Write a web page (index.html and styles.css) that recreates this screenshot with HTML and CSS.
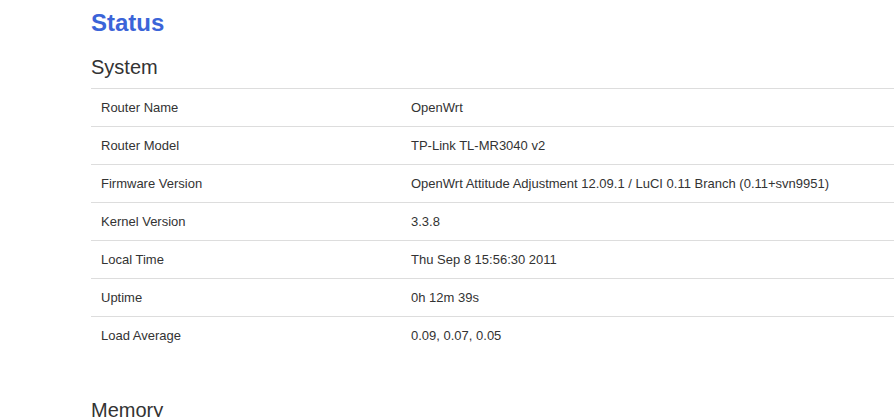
FILE: index.html
```html
<!DOCTYPE html>
<html lang="en">
<head>
    <meta charset="UTF-8">
    <meta name="viewport" content="width=device-width, initial-scale=1.0">
    <title>Status</title>
    <link rel="stylesheet" href="styles.css">
</head>
<body>
    <div class="main">
        <h2 class="page-title">Status</h2>

        <div class="section">
            <h3>System</h3>
            <table class="info-table">
                <tr><td>Router Name</td><td>OpenWrt</td></tr>
                <tr><td>Router Model</td><td>TP-Link TL-MR3040 v2</td></tr>
                <tr><td>Firmware Version</td><td>OpenWrt Attitude Adjustment 12.09.1 / LuCI 0.11 Branch (0.11+svn9951)</td></tr>
                <tr><td>Kernel Version</td><td>3.3.8</td></tr>
                <tr><td>Local Time</td><td>Thu Sep 8 15:56:30 2011</td></tr>
                <tr><td>Uptime</td><td>0h 12m 39s</td></tr>
                <tr><td>Load Average</td><td>0.09, 0.07, 0.05</td></tr>
            </table>
        </div>

        <div class="section">
            <h3>Memory</h3>
        </div>
    </div>
</body>
</html>
```

FILE: styles.css
```css
body {
    font-family: "Liberation Sans", Arial, sans-serif;
    margin: 0;
    padding: 0;
    background: #fff;
    color: #333;
    overflow: hidden;
}
.main {
    padding: 8px 0 0 91px;
}
.page-title {
    margin: 0;
    font-size: 24px;
    line-height: 29px;
    font-weight: bold;
    color: #3b64d8;
}
.section {
    margin-top: 18px;
}
.section + .section {
    margin-top: 44px;
}
.section h3 {
    margin: 0 0 9px;
    font-size: 20px;
    line-height: 24px;
    font-weight: normal;
    color: #333;
}
.info-table {
    width: 100%;
    border-collapse: collapse;
    font-size: 13px;
}
.info-table td {
    padding: 10px;
    line-height: 17px;
    border-top: 1px solid #ddd;
    text-align: left;
    vertical-align: top;
}
.info-table td:first-child {
    width: 290px;
}
```
